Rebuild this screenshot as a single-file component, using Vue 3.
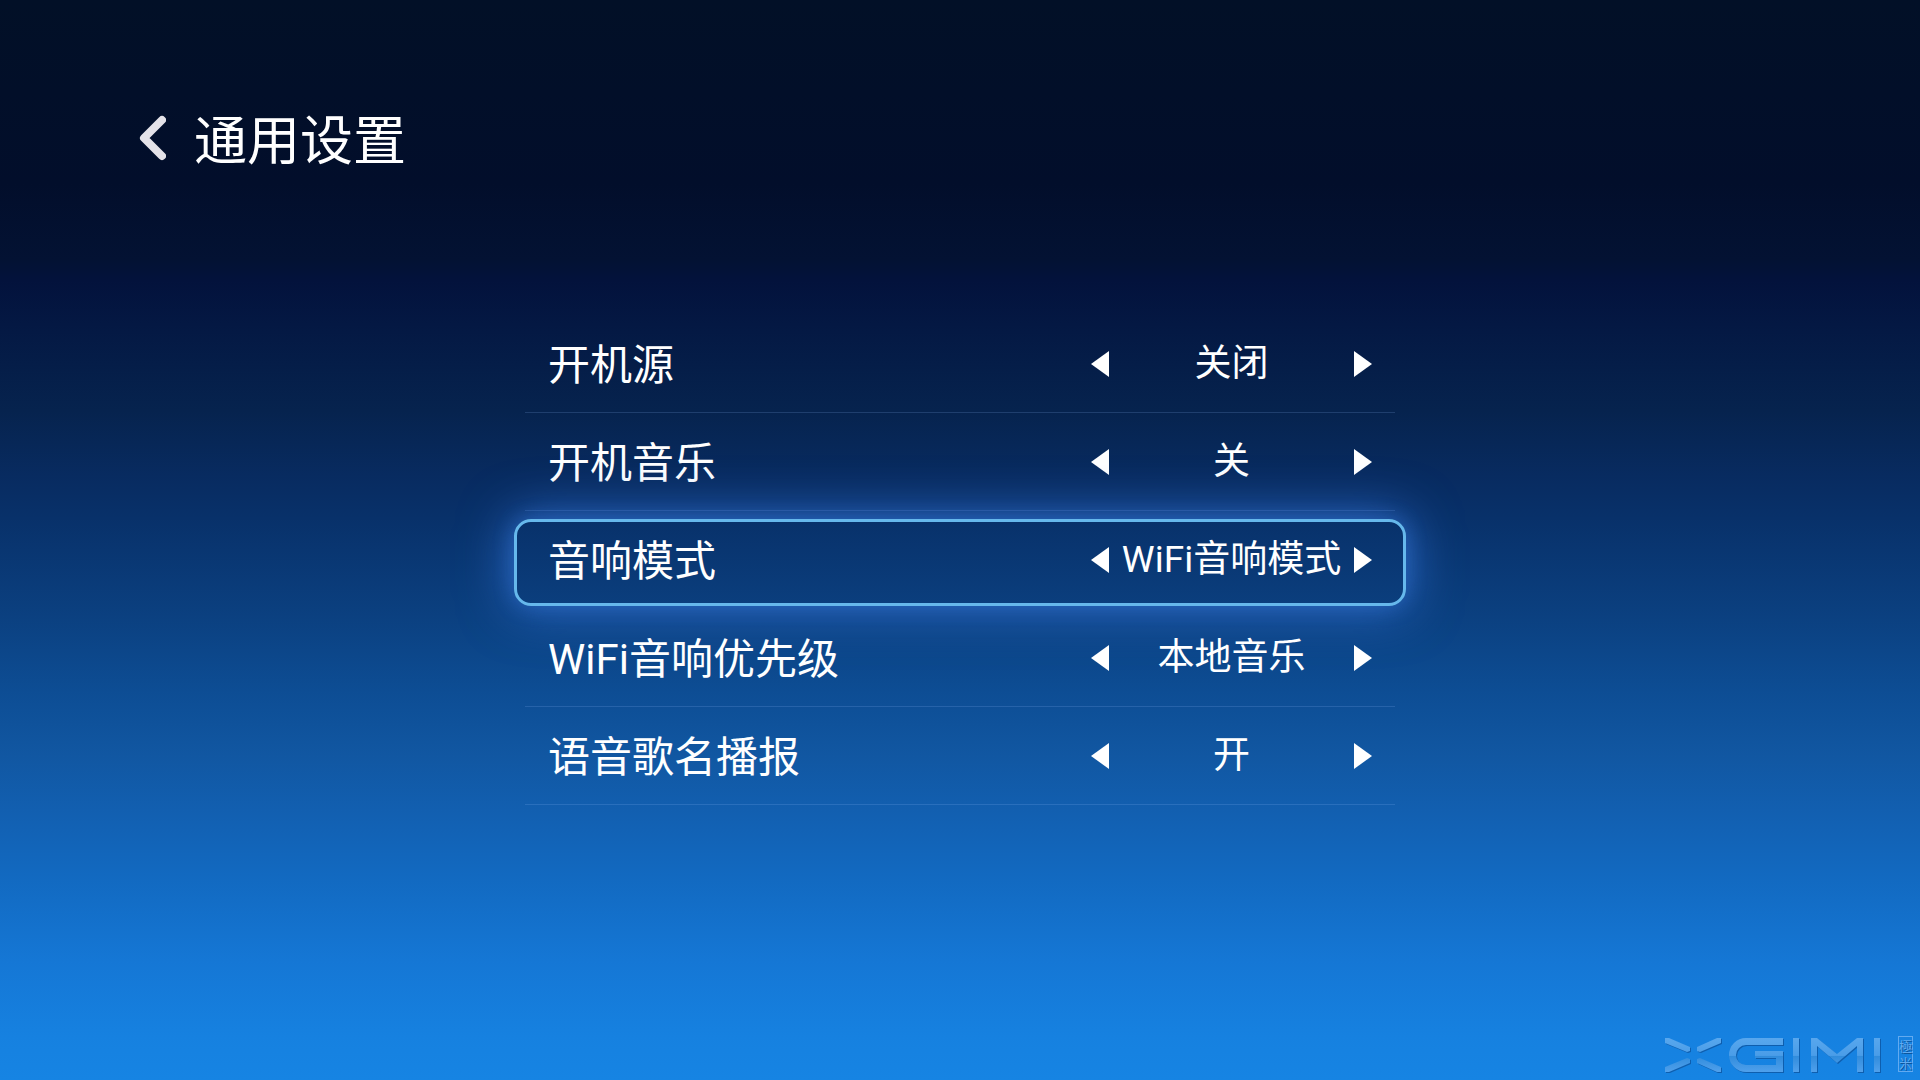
<script setup>
import { ref } from 'vue'

const settings = ref([
  { id: 'source', label: '开机源', options: ['关闭', '开启'], index: 0 },
  { id: 'music', label: '开机音乐', options: ['关', '开'], index: 0 },
  { id: 'mode', label: '音响模式', options: ['WiFi音响模式', '蓝牙音响模式'], index: 0 },
  { id: 'priority', label: 'WiFi音响优先级', options: ['本地音乐', '网络音乐'], index: 0 },
  { id: 'announce', label: '语音歌名播报', options: ['开', '关'], index: 0 },
])
const focused = ref('mode')

function step(item, delta) {
  focused.value = item.id
  item.index = (item.index + delta + item.options.length) % item.options.length
}
</script>

<template>
  <main class="page">
    <header class="header">
      <button class="back" type="button" aria-label="返回">
        <svg width="28" height="46" viewBox="0 0 28 46">
          <path d="M24 5 L6 23 L24 41" fill="none" stroke="#e4e2e8" stroke-width="8" stroke-linecap="round" stroke-linejoin="round" />
        </svg>
      </button>
      <h1 class="title">通用设置</h1>
    </header>

    <ul class="list">
      <li v-for="item in settings" :key="item.id" class="row" :class="{ focused: focused === item.id }">
        <span :id="item.id" class="label">{{ item.label }}</span>
        <div class="stepper" role="group" :aria-labelledby="item.id">
          <button class="arrow" type="button" aria-label="上一项" @click="step(item, -1)">
            <svg width="18" height="26" viewBox="0 0 18 26"><path d="M18 0 V26 L0 13 Z" fill="currentColor" /></svg>
          </button>
          <output class="value">{{ item.options[item.index] }}</output>
          <button class="arrow" type="button" aria-label="下一项" @click="step(item, 1)">
            <svg width="18" height="26" viewBox="0 0 18 26"><path d="M0 0 V26 L18 13 Z" fill="currentColor" /></svg>
          </button>
        </div>
      </li>
    </ul>

    <footer class="brand">
      <svg class="logo" width="218" height="36" viewBox="0 0 218 36" role="img" aria-label="XGIMI">
        <defs>
          <linearGradient id="metal" x1="0" y1="0" x2="0" y2="36" gradientUnits="userSpaceOnUse">
            <stop offset="0" stop-color="#5aa8ee" />
            <stop offset="0.54" stop-color="#4a9de8" />
            <stop offset="0.56" stop-color="#318cdc" />
            <stop offset="1" stop-color="#4fa0ec" />
          </linearGradient>
        </defs>
        <g fill="url(#metal)">
          <path d="M0 2 H4 L25 11 V15 L22 16 L0 7 Z" />
          <path d="M56 2 H52 L32 11 V15 L35 16 L56 7 Z" />
          <path d="M0 36 H4 L25 27 V23 L22 22 L0 31 Z" />
          <path d="M56 36 H52 L32 27 V23 L35 22 L56 31 Z" />
          <path d="M146 2 H152 L172 18 L192 2 H198 V36 H192 V10 L172 27 L152 10 V36 H146 Z" />
          <path d="M128 2 H134 V36 H128 Z M209 2 H215 V36 H209 Z" />
        </g>
        <path d="M118 5.5 H81 A13.5 13.5 0 0 0 81 32.5 H114.5 V18.5 H90" fill="none" stroke="url(#metal)" stroke-width="7" />
      </svg>
      <span class="seal">極米</span>
    </footer>
  </main>
</template>

<style>
body {
  margin: 0;
}
</style>

<style scoped>
.page {
  box-sizing: border-box;
  display: flex;
  flex-direction: column;
  min-height: 100vh;
  padding: 98px 0 8px;
  overflow: hidden;
  color: #fff;
  font-family: Roboto, "Noto Sans CJK SC", sans-serif;
  background: linear-gradient(
    #021027 0%,
    #020e2b 17%,
    #031233 24%,
    #03123c 26%,
    #041843 30%,
    #06234e 38%,
    #082b60 44%,
    #08316a 48%,
    #0b4080 57%,
    #0d4d94 64%,
    #1157a2 70%,
    #125fb0 75%,
    #1269c0 81%,
    #1577d5 89%,
    #1681e0 96%,
    #1684e3 100%
  );
}

.header {
  display: flex;
  align-items: center;
  gap: 28px;
  height: 80px;
  padding-left: 138px;
}

.back,
.arrow {
  display: block;
  padding: 0;
  border: 0;
  color: inherit;
  background: none;
  cursor: pointer;
}

.back svg,
.arrow svg {
  display: block;
}

.title {
  margin: 0;
  padding-top: 8px;
  font-size: 53px;
  font-weight: 400;
  line-height: 80px;
}

.list {
  box-sizing: border-box;
  width: 100%;
  max-width: 870px;
  margin: 137px auto 0;
  padding: 0;
  list-style: none;
}

.row {
  position: relative;
  display: flex;
  align-items: center;
  justify-content: space-between;
  box-sizing: border-box;
  height: 98px;
  padding: 0 23px;
  border-bottom: 1px solid rgba(150, 190, 255, 0.18);
}

.row.focused {
  border-bottom-color: transparent;
}

.row.focused::after {
  content: "";
  position: absolute;
  inset: 8px -11px 2px;
  border: 3px solid #66b8ec;
  border-radius: 17px;
  box-shadow:
    0 0 20px rgba(56, 120, 220, 0.4),
    0 0 50px 4px rgba(56, 120, 220, 0.75);
  pointer-events: none;
}

.label {
  padding-top: 4px;
  font-size: 42px;
  line-height: 60px;
}

.stepper {
  display: flex;
  align-items: center;
  justify-content: space-between;
  width: 281px;
}

.value {
  font-size: 37px;
  line-height: 54px;
  white-space: nowrap;
}

.brand {
  display: flex;
  align-items: center;
  justify-content: flex-end;
  gap: 15px;
  margin-top: auto;
  padding-right: 7px;
}

.logo {
  filter: drop-shadow(1px 1px 0 rgba(10, 70, 140, 0.6));
}

.seal {
  box-sizing: border-box;
  width: 15px;
  height: 36px;
  border: 1px solid #62aaf0;
  color: #62aaf0;
  font-family: "Noto Sans CJK TC", sans-serif;
  font-size: 13px;
  line-height: 17px;
  word-break: break-all;
  text-shadow: 1px 1px 0 #0c559c;
}
</style>
